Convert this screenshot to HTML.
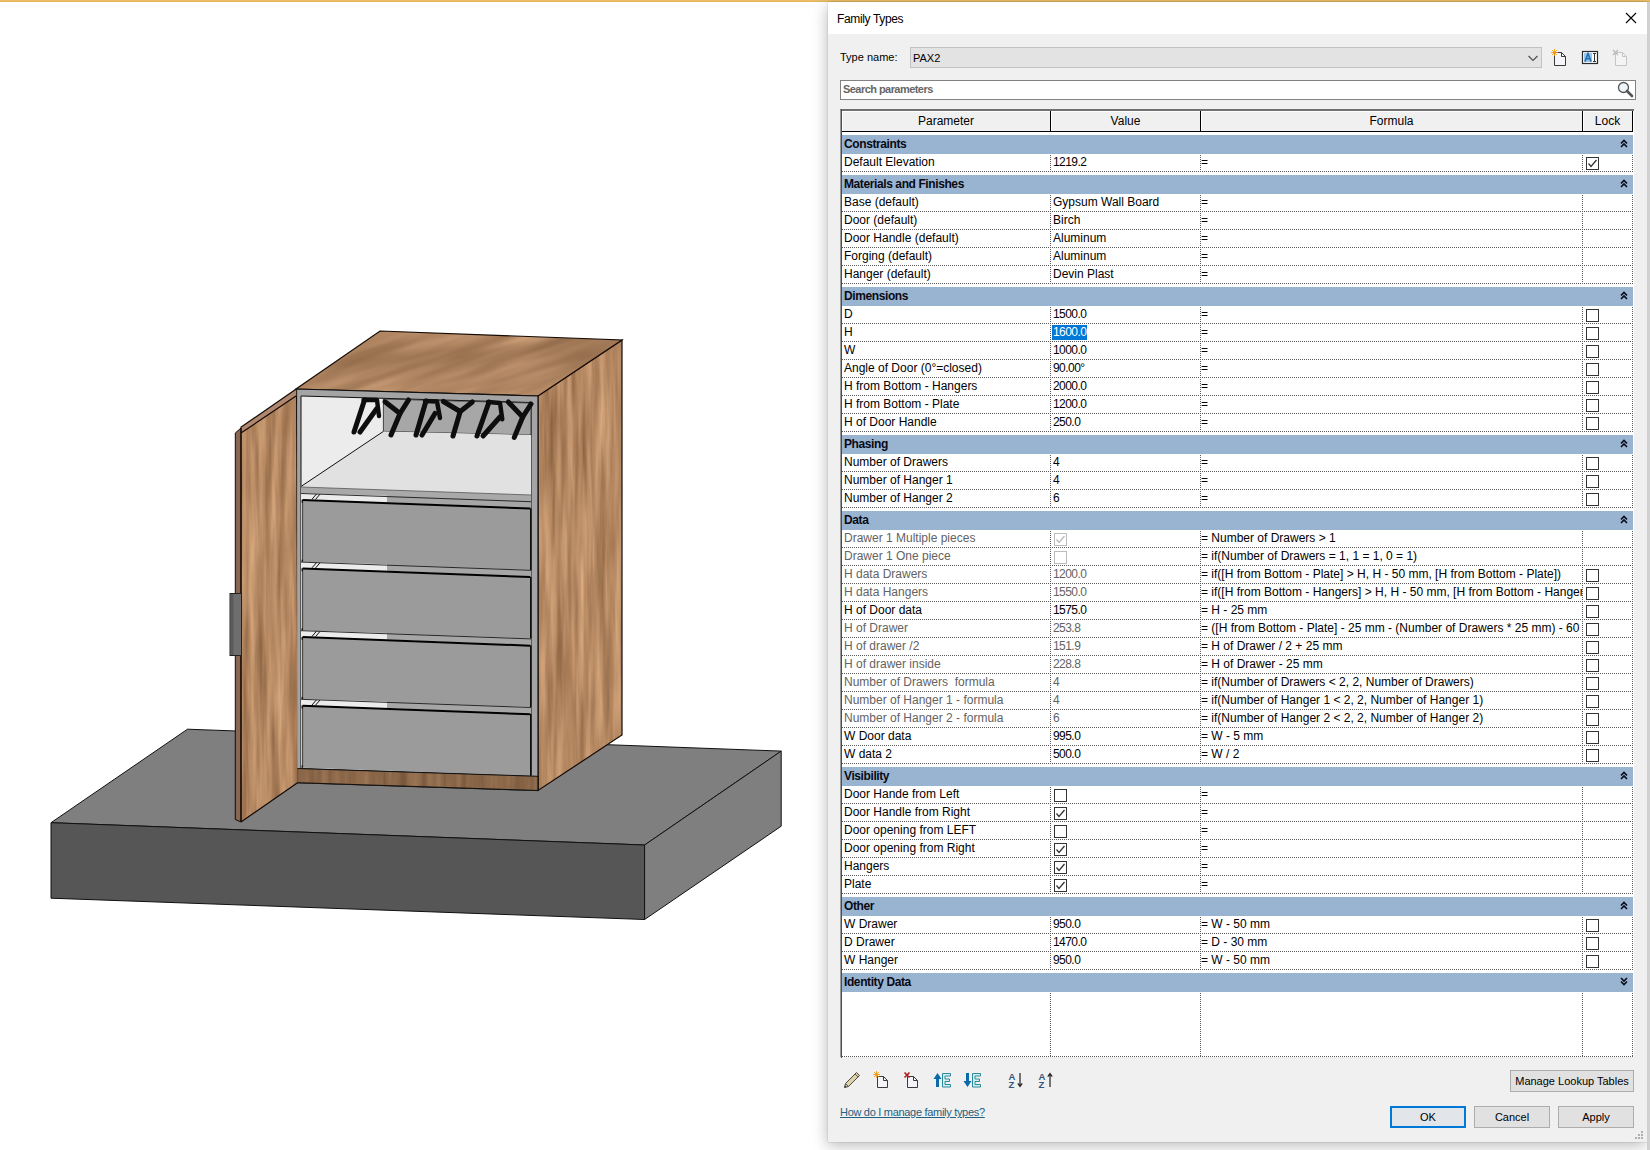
<!DOCTYPE html>
<html><head><meta charset="utf-8"><title>Family Types</title>
<style>
*{box-sizing:border-box}
html,body{margin:0;padding:0;width:1650px;height:1150px;overflow:hidden;background:#fff;font-family:"Liberation Sans",sans-serif;color:#000}
.a{position:absolute}
#topline{position:absolute;left:0;top:0;width:1650px;height:2px;background:linear-gradient(#f3c366,#dbb060)}
#shadow{position:absolute;left:828px;top:2px;width:819px;height:1140px;box-shadow:-1px 4px 14px rgba(0,0,0,0.26), 0 0 1px rgba(0,0,0,0.35)}
#dlg{position:absolute;left:828px;top:2px;width:819px;height:1140px;background:#f0f0f0}
#title{position:absolute;left:828px;top:2px;width:819px;height:32px;background:#fff}
#rstrip{position:absolute;left:1647px;top:2px;width:3px;height:1148px;background:linear-gradient(to right,#cfcfcf,#d2d2d2)}
.t12{font-size:12px;line-height:14px;white-space:nowrap}
.t11{font-size:11px;line-height:13px;white-space:nowrap}
#tbl{position:absolute;left:840px;top:109px;width:794px;height:948px;background:#fff;border-left:1px solid #9a9a9a;border-top:2px solid #707070}
.hdr{position:absolute;top:111px;height:21px;background:#f0f0f0;border-right:1px solid #000;border-bottom:1px solid #000;box-shadow:inset 1px 1px 0 #fff;font-size:12px;line-height:20px;text-align:center}
.row{position:absolute;left:842px;width:791px;height:18px;background-image:linear-gradient(to right,#5a5a5a 50%,transparent 50%);background-size:2px 1px;background-repeat:repeat-x;background-position:0 17px}
.c{position:absolute;top:0;height:17px;font-size:12px;line-height:16px;white-space:nowrap;overflow:hidden}
.c.gr{color:#636363}
.cp{left:0;width:208px;padding-left:2px}
.cv{left:208px;width:150px;padding-left:3px}
.cf{left:358px;width:382px;padding-left:1px}
.cl{left:740px;width:50px}
.vsep{position:absolute;width:1px;background-image:linear-gradient(#5a5a5a 50%,transparent 50%);background-size:1px 2px;background-repeat:repeat-y}
.gw{position:absolute;left:842px;width:791px;height:3px;background:#fff}
.grp{position:absolute;left:842px;width:791px;height:19px;background:#99b4d1}
.gt{position:absolute;left:2px;top:2px;font-size:12px;line-height:14px;font-weight:bold;letter-spacing:-0.4px;color:#0a0a14;white-space:nowrap}
.sel{background:#0078d7;color:#fff;padding:0 1px 0 0;display:inline-block;line-height:15px;margin-top:1px;margin-left:-1px;padding-left:1px}
.cb{position:absolute;width:13px;height:13px}
.btn{position:absolute;height:22px;background:#e1e1e1;border:1px solid #adadad;font-size:11px;line-height:20px;text-align:center;white-space:nowrap}
</style></head><body>
<svg class="a" style="left:0;top:0" width="828" height="1150" viewBox="0 0 828 1150">
<defs>
<filter id="woodV" x="0" y="0" width="828" height="1150" filterUnits="userSpaceOnUse" color-interpolation-filters="sRGB">
<feTurbulence type="fractalNoise" baseFrequency="0.14 0.008" numOctaves="3" seed="7" result="n"/>
<feColorMatrix in="n" type="matrix" values="0.42 0 0 0 0.50  0.38 0 0 0 0.345  0.34 0 0 0 0.215  0 0 0 0 1"/>
</filter>
<filter id="woodT" x="-500" y="-500" width="2000" height="2000" filterUnits="userSpaceOnUse" color-interpolation-filters="sRGB">
<feTurbulence type="fractalNoise" baseFrequency="0.006 0.05" numOctaves="3" seed="3" result="n"/>
<feColorMatrix in="n" type="matrix" values="0.45 0 0 0 0.465  0.4 0 0 0 0.325  0.35 0 0 0 0.21  0 0 0 0 1"/>
</filter>
<clipPath id="cpR"><polygon points="538,396 622,340 622,735 538,790.5"/></clipPath>
<clipPath id="cpT"><polygon points="380,331 622,340 538,396 296,389"/></clipPath>
<clipPath id="cpD"><polygon points="241,433 296,396 297.5,782.5 241,822"/></clipPath>
<clipPath id="cpDT"><polygon points="240.5,427.5 296.2,389.1 296.2,396 241,433"/></clipPath>
<clipPath id="cpP"><polygon points="297,768.5 538,776.3 538,790.5 297,782.7"/></clipPath>
</defs>
<polygon points="51,822.7 187.5,729.2 781.2,751.1 644.6,845" fill="#7f7f7f" stroke="#111" stroke-width="1"/>
<polygon points="51,822.7 644.6,845 644.6,919.5 51,898.2" fill="#565656" stroke="#111" stroke-width="1"/>
<polygon points="644.6,845 781.2,751.1 781.2,826.2 644.6,919.5" fill="#7f7f7f" stroke="#111" stroke-width="1"/>
<g clip-path="url(#cpR)"><rect x="530" y="330" width="100" height="470" filter="url(#woodV)"/></g>
<polygon points="538,396 622,340 622,735 538,790.5" fill="none" stroke="#140a05" stroke-width="1.2"/>
<g clip-path="url(#cpT)"><g transform="rotate(-18 460 360)"><rect x="250" y="230" width="420" height="260" filter="url(#woodT)"/></g></g>
<polygon points="380,331 622,340 538,396 296,389" fill="none" stroke="#140a05" stroke-width="1.2"/>
<polygon points="296.5,389 538,396 538,790.5 296.5,782.7" fill="#a4a4a4" stroke="#111" stroke-width="1.2"/>
<polygon points="301,396 531,402.5 531,776 301,768.5" fill="#ececec" stroke="#111" stroke-width="1"/>
<polygon points="383.4,399 531,403 531,435 383.4,431.4" fill="#a7a7a7" stroke="#222" stroke-width="0.8"/>
<polygon points="383.4,431.4 531,435 531,495 301,487 301,486" fill="#e1e1e1"/>
<path d="M383.4 431.4 L301 486.5" stroke="#111" stroke-width="1" fill="none"/>
<polygon points="301,487 531,495 531,502 301,493.5" fill="#a9a9a9"/>
<path d="M301 487 L531 495" stroke="#555" stroke-width="0.8"/>
<polygon points="301,493.2 387,495.7 387,502.2 301,499.7" fill="#ececec"/>
<polygon points="387,495.7 531,501.4 531,508.3 387,502.2" fill="#a6a6a6"/>
<path d="M312 499.2 L316.5 494.0 M315.5 499.4 L320 494.2" stroke="#111" stroke-width="1"/>
<polygon points="302.6,499.7 530.3,508.3 530.3,569.9 302.6,562.0" fill="#9b9b9b"/>
<path d="M302.6 499.9 L530.3 508.5" stroke="#000" stroke-width="2"/>
<path d="M302.6 499.7 L302.6 562.0" stroke="#000" stroke-width="1"/>
<path d="M530.8 508.3 L530.8 569.9" stroke="#000" stroke-width="1.4"/>
<path d="M301.8 502.7 L301.8 559.7" stroke="#fff" stroke-width="0.8"/>
<path d="M301 493.5 L531 501.7" stroke="#1a1a1a" stroke-width="0.9"/>
<polygon points="301,561.8 387,564.3 387,570.8 301,568.3" fill="#ececec"/>
<polygon points="387,564.3 531,570.0 531,576.9 387,570.8" fill="#a6a6a6"/>
<path d="M312 567.8 L316.5 562.5999999999999 M315.5 568.0 L320 562.8" stroke="#111" stroke-width="1"/>
<polygon points="302.6,568.3 530.3,576.9 530.3,638.5 302.6,630.5999999999999" fill="#9b9b9b"/>
<path d="M302.6 568.5 L530.3 577.0999999999999" stroke="#000" stroke-width="2"/>
<path d="M302.6 568.3 L302.6 630.5999999999999" stroke="#000" stroke-width="1"/>
<path d="M530.8 576.9 L530.8 638.5" stroke="#000" stroke-width="1.4"/>
<path d="M301.8 571.3 L301.8 628.3" stroke="#fff" stroke-width="0.8"/>
<path d="M301 562.0999999999999 L531 570.3" stroke="#1a1a1a" stroke-width="0.9"/>
<polygon points="301,630.4 387,632.9 387,639.4 301,636.9" fill="#ececec"/>
<polygon points="387,632.9 531,638.6 531,645.5 387,639.4" fill="#a6a6a6"/>
<path d="M312 636.4 L316.5 631.1999999999999 M315.5 636.6 L320 631.4" stroke="#111" stroke-width="1"/>
<polygon points="302.6,636.9 530.3,645.5 530.3,707.1 302.6,699.1999999999999" fill="#9b9b9b"/>
<path d="M302.6 637.1 L530.3 645.6999999999999" stroke="#000" stroke-width="2"/>
<path d="M302.6 636.9 L302.6 699.1999999999999" stroke="#000" stroke-width="1"/>
<path d="M530.8 645.5 L530.8 707.1" stroke="#000" stroke-width="1.4"/>
<path d="M301.8 639.9 L301.8 696.9" stroke="#fff" stroke-width="0.8"/>
<path d="M301 630.6999999999999 L531 638.9" stroke="#1a1a1a" stroke-width="0.9"/>
<polygon points="301,699.0 387,701.5 387,708.0 301,705.5" fill="#ececec"/>
<polygon points="387,701.5 531,707.2 531,714.1 387,708.0" fill="#a6a6a6"/>
<path d="M312 705.0 L316.5 699.8 M315.5 705.2 L320 700.0" stroke="#111" stroke-width="1"/>
<polygon points="302.6,705.5 530.3,714.1 530.3,775.7 302.6,767.8" fill="#9b9b9b"/>
<path d="M302.6 705.7 L530.3 714.3" stroke="#000" stroke-width="2"/>
<path d="M302.6 705.5 L302.6 767.8" stroke="#000" stroke-width="1"/>
<path d="M530.8 714.1 L530.8 775.7" stroke="#000" stroke-width="1.4"/>
<path d="M301.8 708.5 L301.8 765.5" stroke="#fff" stroke-width="0.8"/>
<path d="M301 699.3 L531 707.5" stroke="#1a1a1a" stroke-width="0.9"/>
<g clip-path="url(#cpP)"><rect x="290" y="760" width="260" height="40" filter="url(#woodV)" opacity="0.85"/><rect x="290" y="760" width="260" height="40" fill="#4a2a10" opacity="0.38"/></g>
<polygon points="297,768.5 538,776.3 538,790.5 297,782.7" fill="none" stroke="#111" stroke-width="1"/>
<g clip-path="url(#cpD)"><rect x="235" y="380" width="70" height="450" filter="url(#woodV)"/></g>
<g clip-path="url(#cpDT)"><rect x="235" y="380" width="70" height="60" fill="#b08870"/></g>
<polygon points="235.3,433 241,428 241,822 235.3,819.5" fill="#876654" stroke="#140a05" stroke-width="1"/>
<path d="M240.5 427.5 L296.2 389.1 M241 433 L296 396 M241 822 L297.5 782.7 M241 428 L241 822" stroke="#140a05" stroke-width="1.2" fill="none"/>
<rect x="230" y="593.5" width="11.5" height="62" fill="#6e6e6e" stroke="#222" stroke-width="1"/>
<rect x="230.5" y="594" width="3" height="61" fill="#5a5a5a"/>
<path d="M354 432 L364.5 400" stroke="#0e0e0e" stroke-width="5.0" stroke-linecap="round" stroke-linejoin="round" fill="none"/>
<path d="M360 432 L376.5 409" stroke="#0e0e0e" stroke-width="5.0" stroke-linecap="round" stroke-linejoin="round" fill="none"/>
<path d="M363.5 400 L377 400 L379 416" stroke="#0e0e0e" stroke-width="4.4" stroke-linecap="round" stroke-linejoin="round" fill="none"/>
<path d="M385 401.8 L400 413.5 L408.5 400" stroke="#0e0e0e" stroke-width="5.0" stroke-linecap="round" stroke-linejoin="round" fill="none"/>
<path d="M400 413.5 L391 435" stroke="#0e0e0e" stroke-width="5.0" stroke-linecap="round" stroke-linejoin="round" fill="none"/>
<path d="M416 435 L426 401" stroke="#0e0e0e" stroke-width="5.0" stroke-linecap="round" stroke-linejoin="round" fill="none"/>
<path d="M422 435 L435 413.5" stroke="#0e0e0e" stroke-width="5.0" stroke-linecap="round" stroke-linejoin="round" fill="none"/>
<path d="M425 401 L437 401.5 L440 418" stroke="#0e0e0e" stroke-width="4.4" stroke-linecap="round" stroke-linejoin="round" fill="none"/>
<path d="M443.4 401.5 L460.2 411.5 L472.3 402" stroke="#0e0e0e" stroke-width="5.0" stroke-linecap="round" stroke-linejoin="round" fill="none"/>
<path d="M460.2 411.5 L453 436" stroke="#0e0e0e" stroke-width="5.0" stroke-linecap="round" stroke-linejoin="round" fill="none"/>
<path d="M477 436 L489 402" stroke="#0e0e0e" stroke-width="5.0" stroke-linecap="round" stroke-linejoin="round" fill="none"/>
<path d="M483 436 L500 417" stroke="#0e0e0e" stroke-width="5.0" stroke-linecap="round" stroke-linejoin="round" fill="none"/>
<path d="M488 402 L500 403 L502.3 419.4" stroke="#0e0e0e" stroke-width="4.4" stroke-linecap="round" stroke-linejoin="round" fill="none"/>
<path d="M508.3 402 L522.7 417 L531 404" stroke="#0e0e0e" stroke-width="5.0" stroke-linecap="round" stroke-linejoin="round" fill="none"/>
<path d="M522.7 417 L514.3 437.4" stroke="#0e0e0e" stroke-width="5.0" stroke-linecap="round" stroke-linejoin="round" fill="none"/>
</svg>
<div id="topline"></div>
<div id="shadow"></div>
<div id="dlg"></div>
<div id="title"></div>
<div id="rstrip"></div>
<div class="a t12" style="left:837px;top:12px;letter-spacing:-0.35px">Family Types</div>
<svg class="a" style="left:1625px;top:12px" width="12" height="12" viewBox="0 0 12 12"><path d="M1 1 L11 11 M11 1 L1 11" stroke="#000" stroke-width="1.1"/></svg>

<div class="a t11" style="left:840px;top:51px">Type name:</div>
<div class="a" style="left:910px;top:47px;width:632px;height:21px;background:#e3e3e3;border:1px solid #c2c2c2"></div>
<div class="a t11" style="left:913px;top:52px">PAX2</div>
<svg class="a" style="left:1527px;top:54px" width="12" height="8" viewBox="0 0 12 8"><path d="M1.5 2 L6 6.5 L10.5 2" fill="none" stroke="#505050" stroke-width="1.2"/></svg>

<!-- new type icon -->
<svg class="a" style="left:1551px;top:49px" width="18" height="18" viewBox="0 0 18 18">
<path d="M3.5 3.5 H10.5 L14.5 7.5 V16.5 H3.5 Z" fill="#f6f6fa" stroke="#3a3a3a" stroke-width="1"/>
<path d="M10.5 3.5 V7.5 H14.5" fill="none" stroke="#3a3a3a" stroke-width="1"/>
<g stroke="#f09a10" stroke-width="0.9" stroke-linecap="round"><path d="M3.5 0.5 V6.5 M0.5 3.5 H6.5 M1.4 1.4 L5.6 5.6 M5.6 1.4 L1.4 5.6"/></g>
</svg>
<!-- rename icon -->
<svg class="a" style="left:1581px;top:50px" width="18" height="15" viewBox="0 0 18 15">
<rect x="1.5" y="1.5" width="15" height="12" fill="#fff" stroke="#2a2a2a" stroke-width="1.2"/>
<rect x="3" y="3" width="8" height="9" fill="#9cc7ea"/>
<path d="M4 11.5 L7 3.5 L10 11.5 M5.2 8.8 H8.8" fill="none" stroke="#1e6eb4" stroke-width="1.6"/>
<path d="M12 3.5 H15 M13.5 3.5 V11.5 M12 11.5 H15" fill="none" stroke="#333" stroke-width="1"/>
</svg>
<!-- delete icon (disabled) -->
<svg class="a" style="left:1612px;top:49px" width="18" height="18" viewBox="0 0 18 18">
<path d="M3.5 3.5 H10.5 L14.5 7.5 V16.5 H3.5 Z" fill="#f4f4f4" stroke="#c4c4c4" stroke-width="1"/>
<path d="M10.5 3.5 V7.5 H14.5" fill="none" stroke="#c4c4c4" stroke-width="1"/>
<path d="M1 1 L6 6 M6 1 L1 6" stroke="#bdbdbd" stroke-width="1.5"/>
</svg>

<div class="a" style="left:840px;top:80px;width:796px;height:20px;background:#fff;border:1px solid #828282"></div>
<div class="a t11" style="left:843px;top:83px;color:#666;font-weight:bold;letter-spacing:-0.55px">Search parameters</div>
<svg class="a" style="left:1615px;top:80px" width="20" height="20" viewBox="0 0 20 20">
<circle cx="8.5" cy="7.5" r="5" fill="#eef4f8" stroke="#555" stroke-width="1.3"/>
<path d="M12 11 L17 16" stroke="#555" stroke-width="2.6" stroke-linecap="round"/>
</svg>

<div id="tbl"></div>
<div class="a" style="left:841px;top:109px;width:1px;height:949px;background:#4e4e4e"></div>
<div class="hdr" style="left:842px;width:209px">Parameter</div>
<div class="hdr" style="left:1051px;width:150px">Value</div>
<div class="hdr" style="left:1201px;width:382px">Formula</div>
<div class="hdr" style="left:1583px;width:50px">Lock</div>
<div class="vsep" style="left:1050px;top:133px;height:924px"></div>
<div class="vsep" style="left:1200px;top:133px;height:924px"></div>
<div class="vsep" style="left:1582px;top:133px;height:924px"></div>
<div class="vsep" style="left:1632px;top:133px;height:924px"></div>
<div class="a" style="left:842px;top:1056px;width:791px;height:1px;background-image:linear-gradient(to right,#5a5a5a 50%,transparent 50%);background-size:2px 1px"></div>
<div class="gw" style="top:132px"></div><div class="grp" style="top:135px"><span class="gt">Constraints</span></div>
<svg class="a" style="left:1620px;top:139px" width="8" height="9" viewBox="0 0 8 9"><path d="M1 4.5 L4 1.5 L7 4.5 M1 8 L4 5 L7 8" fill="none" stroke="#0a0a1a" stroke-width="1.6"/></svg>
<div class="row" style="top:154px">
<div class="c cp">Default Elevation</div>
<div class="c cv" style="letter-spacing:-0.55px">1219.2</div>
<div class="c cf">=</div>
<div class="c cl"></div>
</div>
<div class="cb" style="left:1586px;top:157px"><svg width="13" height="13" viewBox="0 0 13 13" style="position:absolute;left:0;top:0"><rect x="0.5" y="0.5" width="12" height="12" fill="#fff" stroke="#333"/><path d="M2.5 6.5 L5 9.5 L10.5 3" fill="none" stroke="#333" stroke-width="1.3"/></svg></div>
<div class="gw" style="top:172px"></div><div class="grp" style="top:175px"><span class="gt">Materials and Finishes</span></div>
<svg class="a" style="left:1620px;top:179px" width="8" height="9" viewBox="0 0 8 9"><path d="M1 4.5 L4 1.5 L7 4.5 M1 8 L4 5 L7 8" fill="none" stroke="#0a0a1a" stroke-width="1.6"/></svg>
<div class="row" style="top:194px">
<div class="c cp">Base (default)</div>
<div class="c cv">Gypsum Wall Board</div>
<div class="c cf">=</div>
<div class="c cl"></div>
</div>
<div class="row" style="top:212px">
<div class="c cp">Door (default)</div>
<div class="c cv">Birch</div>
<div class="c cf">=</div>
<div class="c cl"></div>
</div>
<div class="row" style="top:230px">
<div class="c cp">Door Handle (default)</div>
<div class="c cv">Aluminum</div>
<div class="c cf">=</div>
<div class="c cl"></div>
</div>
<div class="row" style="top:248px">
<div class="c cp">Forging (default)</div>
<div class="c cv">Aluminum</div>
<div class="c cf">=</div>
<div class="c cl"></div>
</div>
<div class="row" style="top:266px">
<div class="c cp">Hanger (default)</div>
<div class="c cv">Devin Plast</div>
<div class="c cf">=</div>
<div class="c cl"></div>
</div>
<div class="gw" style="top:284px"></div><div class="grp" style="top:287px"><span class="gt">Dimensions</span></div>
<svg class="a" style="left:1620px;top:291px" width="8" height="9" viewBox="0 0 8 9"><path d="M1 4.5 L4 1.5 L7 4.5 M1 8 L4 5 L7 8" fill="none" stroke="#0a0a1a" stroke-width="1.6"/></svg>
<div class="row" style="top:306px">
<div class="c cp">D</div>
<div class="c cv" style="letter-spacing:-0.55px">1500.0</div>
<div class="c cf">=</div>
<div class="c cl"></div>
</div>
<div class="cb" style="left:1586px;top:309px"><svg width="13" height="13" viewBox="0 0 13 13" style="position:absolute;left:0;top:0"><rect x="0.5" y="0.5" width="12" height="12" fill="#fff" stroke="#333"/></svg></div>
<div class="row" style="top:324px">
<div class="c cp">H</div>
<div class="c cv"><span class="sel" style="letter-spacing:-0.55px">1600.0</span></div>
<div class="c cf">=</div>
<div class="c cl"></div>
</div>
<div class="cb" style="left:1586px;top:327px"><svg width="13" height="13" viewBox="0 0 13 13" style="position:absolute;left:0;top:0"><rect x="0.5" y="0.5" width="12" height="12" fill="#fff" stroke="#333"/></svg></div>
<div class="row" style="top:342px">
<div class="c cp">W</div>
<div class="c cv" style="letter-spacing:-0.55px">1000.0</div>
<div class="c cf">=</div>
<div class="c cl"></div>
</div>
<div class="cb" style="left:1586px;top:345px"><svg width="13" height="13" viewBox="0 0 13 13" style="position:absolute;left:0;top:0"><rect x="0.5" y="0.5" width="12" height="12" fill="#fff" stroke="#333"/></svg></div>
<div class="row" style="top:360px">
<div class="c cp">Angle of Door (0°=closed)</div>
<div class="c cv" style="letter-spacing:-0.55px">90.00°</div>
<div class="c cf">=</div>
<div class="c cl"></div>
</div>
<div class="cb" style="left:1586px;top:363px"><svg width="13" height="13" viewBox="0 0 13 13" style="position:absolute;left:0;top:0"><rect x="0.5" y="0.5" width="12" height="12" fill="#fff" stroke="#333"/></svg></div>
<div class="row" style="top:378px">
<div class="c cp">H from Bottom - Hangers</div>
<div class="c cv" style="letter-spacing:-0.55px">2000.0</div>
<div class="c cf">=</div>
<div class="c cl"></div>
</div>
<div class="cb" style="left:1586px;top:381px"><svg width="13" height="13" viewBox="0 0 13 13" style="position:absolute;left:0;top:0"><rect x="0.5" y="0.5" width="12" height="12" fill="#fff" stroke="#333"/></svg></div>
<div class="row" style="top:396px">
<div class="c cp">H from Bottom - Plate</div>
<div class="c cv" style="letter-spacing:-0.55px">1200.0</div>
<div class="c cf">=</div>
<div class="c cl"></div>
</div>
<div class="cb" style="left:1586px;top:399px"><svg width="13" height="13" viewBox="0 0 13 13" style="position:absolute;left:0;top:0"><rect x="0.5" y="0.5" width="12" height="12" fill="#fff" stroke="#333"/></svg></div>
<div class="row" style="top:414px">
<div class="c cp">H of Door Handle</div>
<div class="c cv" style="letter-spacing:-0.55px">250.0</div>
<div class="c cf">=</div>
<div class="c cl"></div>
</div>
<div class="cb" style="left:1586px;top:417px"><svg width="13" height="13" viewBox="0 0 13 13" style="position:absolute;left:0;top:0"><rect x="0.5" y="0.5" width="12" height="12" fill="#fff" stroke="#333"/></svg></div>
<div class="gw" style="top:432px"></div><div class="grp" style="top:435px"><span class="gt">Phasing</span></div>
<svg class="a" style="left:1620px;top:439px" width="8" height="9" viewBox="0 0 8 9"><path d="M1 4.5 L4 1.5 L7 4.5 M1 8 L4 5 L7 8" fill="none" stroke="#0a0a1a" stroke-width="1.6"/></svg>
<div class="row" style="top:454px">
<div class="c cp">Number of Drawers</div>
<div class="c cv">4</div>
<div class="c cf">=</div>
<div class="c cl"></div>
</div>
<div class="cb" style="left:1586px;top:457px"><svg width="13" height="13" viewBox="0 0 13 13" style="position:absolute;left:0;top:0"><rect x="0.5" y="0.5" width="12" height="12" fill="#fff" stroke="#333"/></svg></div>
<div class="row" style="top:472px">
<div class="c cp">Number of Hanger 1</div>
<div class="c cv">4</div>
<div class="c cf">=</div>
<div class="c cl"></div>
</div>
<div class="cb" style="left:1586px;top:475px"><svg width="13" height="13" viewBox="0 0 13 13" style="position:absolute;left:0;top:0"><rect x="0.5" y="0.5" width="12" height="12" fill="#fff" stroke="#333"/></svg></div>
<div class="row" style="top:490px">
<div class="c cp">Number of Hanger 2</div>
<div class="c cv">6</div>
<div class="c cf">=</div>
<div class="c cl"></div>
</div>
<div class="cb" style="left:1586px;top:493px"><svg width="13" height="13" viewBox="0 0 13 13" style="position:absolute;left:0;top:0"><rect x="0.5" y="0.5" width="12" height="12" fill="#fff" stroke="#333"/></svg></div>
<div class="gw" style="top:508px"></div><div class="grp" style="top:511px"><span class="gt">Data</span></div>
<svg class="a" style="left:1620px;top:515px" width="8" height="9" viewBox="0 0 8 9"><path d="M1 4.5 L4 1.5 L7 4.5 M1 8 L4 5 L7 8" fill="none" stroke="#0a0a1a" stroke-width="1.6"/></svg>
<div class="row" style="top:530px">
<div class="c cp gr">Drawer 1 Multiple pieces</div>
<div class="c cv"></div>
<div class="c cf">= Number of Drawers &gt; 1</div>
<div class="c cl"></div>
</div>
<div class="cb" style="left:1054px;top:533px"><svg width="13" height="13" viewBox="0 0 13 13" style="position:absolute;left:0;top:0"><rect x="0.5" y="0.5" width="12" height="12" fill="#fff" stroke="#bcbcbc"/><path d="M2.5 6.5 L5 9.5 L10.5 3" fill="none" stroke="#bcbcbc" stroke-width="1.3"/></svg></div>
<div class="row" style="top:548px">
<div class="c cp gr">Drawer 1 One piece</div>
<div class="c cv"></div>
<div class="c cf">= if(Number of Drawers = 1, 1 = 1, 0 = 1)</div>
<div class="c cl"></div>
</div>
<div class="cb" style="left:1054px;top:551px"><svg width="13" height="13" viewBox="0 0 13 13" style="position:absolute;left:0;top:0"><rect x="0.5" y="0.5" width="12" height="12" fill="#fff" stroke="#bcbcbc"/></svg></div>
<div class="row" style="top:566px">
<div class="c cp gr">H data Drawers</div>
<div class="c cv gr" style="letter-spacing:-0.55px">1200.0</div>
<div class="c cf">= if([H from Bottom - Plate] &gt; H, H - 50 mm, [H from Bottom - Plate])</div>
<div class="c cl"></div>
</div>
<div class="cb" style="left:1586px;top:569px"><svg width="13" height="13" viewBox="0 0 13 13" style="position:absolute;left:0;top:0"><rect x="0.5" y="0.5" width="12" height="12" fill="#fff" stroke="#333"/></svg></div>
<div class="row" style="top:584px">
<div class="c cp gr">H data Hangers</div>
<div class="c cv gr" style="letter-spacing:-0.55px">1550.0</div>
<div class="c cf">= if([H from Bottom - Hangers] &gt; H, H - 50 mm, [H from Bottom - Hangers])</div>
<div class="c cl"></div>
</div>
<div class="cb" style="left:1586px;top:587px"><svg width="13" height="13" viewBox="0 0 13 13" style="position:absolute;left:0;top:0"><rect x="0.5" y="0.5" width="12" height="12" fill="#fff" stroke="#333"/></svg></div>
<div class="row" style="top:602px">
<div class="c cp">H of Door data</div>
<div class="c cv" style="letter-spacing:-0.55px">1575.0</div>
<div class="c cf">= H - 25 mm</div>
<div class="c cl"></div>
</div>
<div class="cb" style="left:1586px;top:605px"><svg width="13" height="13" viewBox="0 0 13 13" style="position:absolute;left:0;top:0"><rect x="0.5" y="0.5" width="12" height="12" fill="#fff" stroke="#333"/></svg></div>
<div class="row" style="top:620px">
<div class="c cp gr">H of Drawer</div>
<div class="c cv gr" style="letter-spacing:-0.55px">253.8</div>
<div class="c cf">= ([H from Bottom - Plate] - 25 mm - (Number of Drawers * 25 mm) - 60 mm) / Number of Drawers</div>
<div class="c cl"></div>
</div>
<div class="cb" style="left:1586px;top:623px"><svg width="13" height="13" viewBox="0 0 13 13" style="position:absolute;left:0;top:0"><rect x="0.5" y="0.5" width="12" height="12" fill="#fff" stroke="#333"/></svg></div>
<div class="row" style="top:638px">
<div class="c cp gr">H of drawer /2</div>
<div class="c cv gr" style="letter-spacing:-0.55px">151.9</div>
<div class="c cf">= H of Drawer / 2 + 25 mm</div>
<div class="c cl"></div>
</div>
<div class="cb" style="left:1586px;top:641px"><svg width="13" height="13" viewBox="0 0 13 13" style="position:absolute;left:0;top:0"><rect x="0.5" y="0.5" width="12" height="12" fill="#fff" stroke="#333"/></svg></div>
<div class="row" style="top:656px">
<div class="c cp gr">H of drawer inside</div>
<div class="c cv gr" style="letter-spacing:-0.55px">228.8</div>
<div class="c cf">= H of Drawer - 25 mm</div>
<div class="c cl"></div>
</div>
<div class="cb" style="left:1586px;top:659px"><svg width="13" height="13" viewBox="0 0 13 13" style="position:absolute;left:0;top:0"><rect x="0.5" y="0.5" width="12" height="12" fill="#fff" stroke="#333"/></svg></div>
<div class="row" style="top:674px">
<div class="c cp gr">Number of Drawers&nbsp; formula</div>
<div class="c cv gr">4</div>
<div class="c cf">= if(Number of Drawers &lt; 2, 2, Number of Drawers)</div>
<div class="c cl"></div>
</div>
<div class="cb" style="left:1586px;top:677px"><svg width="13" height="13" viewBox="0 0 13 13" style="position:absolute;left:0;top:0"><rect x="0.5" y="0.5" width="12" height="12" fill="#fff" stroke="#333"/></svg></div>
<div class="row" style="top:692px">
<div class="c cp gr">Number of Hanger 1 - formula</div>
<div class="c cv gr">4</div>
<div class="c cf">= if(Number of Hanger 1 &lt; 2, 2, Number of Hanger 1)</div>
<div class="c cl"></div>
</div>
<div class="cb" style="left:1586px;top:695px"><svg width="13" height="13" viewBox="0 0 13 13" style="position:absolute;left:0;top:0"><rect x="0.5" y="0.5" width="12" height="12" fill="#fff" stroke="#333"/></svg></div>
<div class="row" style="top:710px">
<div class="c cp gr">Number of Hanger 2 - formula</div>
<div class="c cv gr">6</div>
<div class="c cf">= if(Number of Hanger 2 &lt; 2, 2, Number of Hanger 2)</div>
<div class="c cl"></div>
</div>
<div class="cb" style="left:1586px;top:713px"><svg width="13" height="13" viewBox="0 0 13 13" style="position:absolute;left:0;top:0"><rect x="0.5" y="0.5" width="12" height="12" fill="#fff" stroke="#333"/></svg></div>
<div class="row" style="top:728px">
<div class="c cp">W Door data</div>
<div class="c cv" style="letter-spacing:-0.55px">995.0</div>
<div class="c cf">= W - 5 mm</div>
<div class="c cl"></div>
</div>
<div class="cb" style="left:1586px;top:731px"><svg width="13" height="13" viewBox="0 0 13 13" style="position:absolute;left:0;top:0"><rect x="0.5" y="0.5" width="12" height="12" fill="#fff" stroke="#333"/></svg></div>
<div class="row" style="top:746px">
<div class="c cp">W data 2</div>
<div class="c cv" style="letter-spacing:-0.55px">500.0</div>
<div class="c cf">= W / 2</div>
<div class="c cl"></div>
</div>
<div class="cb" style="left:1586px;top:749px"><svg width="13" height="13" viewBox="0 0 13 13" style="position:absolute;left:0;top:0"><rect x="0.5" y="0.5" width="12" height="12" fill="#fff" stroke="#333"/></svg></div>
<div class="gw" style="top:764px"></div><div class="grp" style="top:767px"><span class="gt">Visibility</span></div>
<svg class="a" style="left:1620px;top:771px" width="8" height="9" viewBox="0 0 8 9"><path d="M1 4.5 L4 1.5 L7 4.5 M1 8 L4 5 L7 8" fill="none" stroke="#0a0a1a" stroke-width="1.6"/></svg>
<div class="row" style="top:786px">
<div class="c cp">Door Hande from Left</div>
<div class="c cv"></div>
<div class="c cf">=</div>
<div class="c cl"></div>
</div>
<div class="cb" style="left:1054px;top:789px"><svg width="13" height="13" viewBox="0 0 13 13" style="position:absolute;left:0;top:0"><rect x="0.5" y="0.5" width="12" height="12" fill="#fff" stroke="#333"/></svg></div>
<div class="row" style="top:804px">
<div class="c cp">Door Handle from Right</div>
<div class="c cv"></div>
<div class="c cf">=</div>
<div class="c cl"></div>
</div>
<div class="cb" style="left:1054px;top:807px"><svg width="13" height="13" viewBox="0 0 13 13" style="position:absolute;left:0;top:0"><rect x="0.5" y="0.5" width="12" height="12" fill="#fff" stroke="#333"/><path d="M2.5 6.5 L5 9.5 L10.5 3" fill="none" stroke="#333" stroke-width="1.3"/></svg></div>
<div class="row" style="top:822px">
<div class="c cp">Door opening from LEFT</div>
<div class="c cv"></div>
<div class="c cf">=</div>
<div class="c cl"></div>
</div>
<div class="cb" style="left:1054px;top:825px"><svg width="13" height="13" viewBox="0 0 13 13" style="position:absolute;left:0;top:0"><rect x="0.5" y="0.5" width="12" height="12" fill="#fff" stroke="#333"/></svg></div>
<div class="row" style="top:840px">
<div class="c cp">Door opening from Right</div>
<div class="c cv"></div>
<div class="c cf">=</div>
<div class="c cl"></div>
</div>
<div class="cb" style="left:1054px;top:843px"><svg width="13" height="13" viewBox="0 0 13 13" style="position:absolute;left:0;top:0"><rect x="0.5" y="0.5" width="12" height="12" fill="#fff" stroke="#333"/><path d="M2.5 6.5 L5 9.5 L10.5 3" fill="none" stroke="#333" stroke-width="1.3"/></svg></div>
<div class="row" style="top:858px">
<div class="c cp">Hangers</div>
<div class="c cv"></div>
<div class="c cf">=</div>
<div class="c cl"></div>
</div>
<div class="cb" style="left:1054px;top:861px"><svg width="13" height="13" viewBox="0 0 13 13" style="position:absolute;left:0;top:0"><rect x="0.5" y="0.5" width="12" height="12" fill="#fff" stroke="#333"/><path d="M2.5 6.5 L5 9.5 L10.5 3" fill="none" stroke="#333" stroke-width="1.3"/></svg></div>
<div class="row" style="top:876px">
<div class="c cp">Plate</div>
<div class="c cv"></div>
<div class="c cf">=</div>
<div class="c cl"></div>
</div>
<div class="cb" style="left:1054px;top:879px"><svg width="13" height="13" viewBox="0 0 13 13" style="position:absolute;left:0;top:0"><rect x="0.5" y="0.5" width="12" height="12" fill="#fff" stroke="#333"/><path d="M2.5 6.5 L5 9.5 L10.5 3" fill="none" stroke="#333" stroke-width="1.3"/></svg></div>
<div class="gw" style="top:894px"></div><div class="grp" style="top:897px"><span class="gt">Other</span></div>
<svg class="a" style="left:1620px;top:901px" width="8" height="9" viewBox="0 0 8 9"><path d="M1 4.5 L4 1.5 L7 4.5 M1 8 L4 5 L7 8" fill="none" stroke="#0a0a1a" stroke-width="1.6"/></svg>
<div class="row" style="top:916px">
<div class="c cp">W Drawer</div>
<div class="c cv" style="letter-spacing:-0.55px">950.0</div>
<div class="c cf">= W - 50 mm</div>
<div class="c cl"></div>
</div>
<div class="cb" style="left:1586px;top:919px"><svg width="13" height="13" viewBox="0 0 13 13" style="position:absolute;left:0;top:0"><rect x="0.5" y="0.5" width="12" height="12" fill="#fff" stroke="#333"/></svg></div>
<div class="row" style="top:934px">
<div class="c cp">D Drawer</div>
<div class="c cv" style="letter-spacing:-0.55px">1470.0</div>
<div class="c cf">= D - 30 mm</div>
<div class="c cl"></div>
</div>
<div class="cb" style="left:1586px;top:937px"><svg width="13" height="13" viewBox="0 0 13 13" style="position:absolute;left:0;top:0"><rect x="0.5" y="0.5" width="12" height="12" fill="#fff" stroke="#333"/></svg></div>
<div class="row" style="top:952px">
<div class="c cp">W Hanger</div>
<div class="c cv" style="letter-spacing:-0.55px">950.0</div>
<div class="c cf">= W - 50 mm</div>
<div class="c cl"></div>
</div>
<div class="cb" style="left:1586px;top:955px"><svg width="13" height="13" viewBox="0 0 13 13" style="position:absolute;left:0;top:0"><rect x="0.5" y="0.5" width="12" height="12" fill="#fff" stroke="#333"/></svg></div>
<div class="gw" style="top:970px"></div><div class="grp" style="top:973px"><span class="gt">Identity Data</span></div>
<svg class="a" style="left:1620px;top:977px" width="8" height="9" viewBox="0 0 8 9"><path d="M1 1 L4 4 L7 1 M1 4.5 L4 7.5 L7 4.5" fill="none" stroke="#0a0a1a" stroke-width="1.6"/></svg>

<!-- bottom toolbar -->
<svg class="a" style="left:842px;top:1070px" width="20" height="20" viewBox="0 0 20 20">
<path d="M2.5 17.5 L3.5 13.5 L14.5 2.5 L17.5 5.5 L6.5 16.5 Z" fill="#e0d2a8" stroke="#4a4a4a" stroke-width="1"/>
<path d="M3.5 13.5 L6.5 16.5 M13 4 L16 7" stroke="#4a4a4a" stroke-width="0.9"/>
<path d="M2.5 17.5 L3 15.5 L4.5 17 Z" fill="#333"/>
</svg>
<svg class="a" style="left:873px;top:1071px" width="18" height="18" viewBox="0 0 18 18">
<path d="M4.5 5.5 H10.5 L14.5 9.5 V16.5 H4.5 Z" fill="#f4f4fa" stroke="#3a3a3a" stroke-width="1"/>
<path d="M10.5 5.5 V9.5 H14.5" fill="none" stroke="#3a3a3a" stroke-width="1"/>
<g stroke="#f09a10" stroke-width="0.9" stroke-linecap="round"><path d="M3.5 0.5 V6.5 M0.5 3.5 H6.5 M1.4 1.4 L5.6 5.6 M5.6 1.4 L1.4 5.6"/></g>
</svg>
<svg class="a" style="left:903px;top:1071px" width="18" height="18" viewBox="0 0 18 18">
<path d="M4.5 5.5 H10.5 L14.5 9.5 V16.5 H4.5 Z" fill="#f4f4fa" stroke="#3a3a3a" stroke-width="1"/>
<path d="M10.5 5.5 V9.5 H14.5" fill="none" stroke="#3a3a3a" stroke-width="1"/>
<path d="M1.5 1.5 L6.5 6.5 M6.5 1.5 L1.5 6.5" stroke="#b02020" stroke-width="1.7"/>
</svg>
<svg class="a" style="left:932px;top:1071px" width="20" height="18" viewBox="0 0 20 18">
<path d="M5.5 2 L1.5 8 H4 V16 H7 V8 H9.5 Z" fill="#0b6aa8"/>
<path d="M10.5 2.5 H18.5 V5 H13 V8 H17.5 V10.5 H13 V13.5 H18.5 V16 H10.5 Z" fill="#d2eef2" stroke="#2b8a9a" stroke-width="1"/>
</svg>
<svg class="a" style="left:962px;top:1071px" width="20" height="18" viewBox="0 0 20 18">
<path d="M5.5 16 L1.5 10 H4 V2 H7 V10 H9.5 Z" fill="#0b6aa8"/>
<path d="M10.5 2.5 H18.5 V5 H13 V8 H17.5 V10.5 H13 V13.5 H18.5 V16 H10.5 Z" fill="#d2eef2" stroke="#2b8a9a" stroke-width="1"/>
</svg>
<svg class="a" style="left:1007px;top:1071px" width="18" height="18" viewBox="0 0 18 18">
<text x="1.5" y="8.5" font-family="Liberation Sans" font-weight="bold" font-size="9.5" fill="#34557a">A</text>
<text x="1.5" y="16.5" font-family="Liberation Sans" font-weight="bold" font-size="9.5" fill="#34557a">Z</text>
<path d="M13 2 V15 M10.8 12.3 L13 15.5 L15.2 12.3" fill="none" stroke="#222" stroke-width="1.2"/>
</svg>
<svg class="a" style="left:1037px;top:1071px" width="18" height="18" viewBox="0 0 18 18">
<text x="1.5" y="8.5" font-family="Liberation Sans" font-weight="bold" font-size="9.5" fill="#34557a">A</text>
<text x="1.5" y="16.5" font-family="Liberation Sans" font-weight="bold" font-size="9.5" fill="#34557a">Z</text>
<path d="M13 16 V3 M10.8 5.7 L13 2.5 L15.2 5.7" fill="none" stroke="#222" stroke-width="1.2"/>
</svg>

<div class="btn" style="left:1510px;top:1070px;width:124px">Manage Lookup Tables</div>
<div class="a t11" style="left:840px;top:1106px;color:#23607f;text-decoration:underline;letter-spacing:-0.3px">How do I manage family types?</div>
<div class="btn" style="left:1390px;top:1106px;width:76px;border:2px solid #0078d7;line-height:18px;background:#e2e6ea">OK</div>
<div class="btn" style="left:1474px;top:1106px;width:76px">Cancel</div>
<div class="btn" style="left:1558px;top:1106px;width:76px">Apply</div>
<svg class="a" style="left:1634px;top:1130px" width="10" height="10" viewBox="0 0 10 10"><g fill="#b0b0b0"><rect x="7" y="1" width="2" height="2"/><rect x="7" y="4" width="2" height="2"/><rect x="4" y="4" width="2" height="2"/><rect x="7" y="7" width="2" height="2"/><rect x="4" y="7" width="2" height="2"/><rect x="1" y="7" width="2" height="2"/></g></svg>
</body></html>
